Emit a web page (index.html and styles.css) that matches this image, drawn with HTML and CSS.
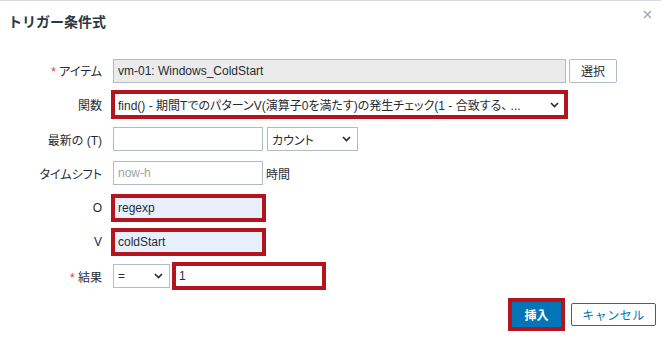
FILE: index.html
```html
<!DOCTYPE html>
<html lang="ja">
<head>
    <meta charset="UTF-8">
    <meta name="viewport" content="width=device-width, initial-scale=1.0">
    <title>トリガー条件式</title>
    <link rel="stylesheet" href="styles.css">
</head>
<body>
    <div class="dialog">
        <div class="head">
            <h4 class="title">トリガー条件式</h4>
            <button class="close" title="閉じる">
                <svg width="9" height="9" viewBox="0 0 9 9"><path d="M1 1L8 8M8 1L1 8" stroke="#a3adb2" stroke-width="1.6" fill="none"/></svg>
            </button>
        </div>

        <form class="form">
            <label class="label"><span class="req">*</span> アイテム</label>
            <div class="field">
                <input class="input wide" type="text" value="vm-01: Windows_ColdStart" readonly>
                <button type="button" class="btn-alt">選択</button>
            </div>

            <label class="label">関数</label>
            <div class="field">
                <button type="button" class="select wide hl">
                    <span class="sel-text">find() - 期間TでのパターンV(演算子0を満たす)の発生チェック(1 - 合致する、 ...</span>
                    <svg class="chev" width="9" height="6" viewBox="0 0 9 6"><path d="M1 1L4.5 4.5L8 1" stroke="#1f2c33" stroke-width="1.6" fill="none"/></svg>
                </button>
            </div>

            <label class="label">最新の (T)</label>
            <div class="field">
                <input class="input" type="text">
                <button type="button" class="select count">
                    <span class="sel-text">カウント</span>
                    <svg class="chev" width="9" height="6" viewBox="0 0 9 6"><path d="M1 1L4.5 4.5L8 1" stroke="#1f2c33" stroke-width="1.6" fill="none"/></svg>
                </button>
            </div>

            <label class="label">タイムシフト</label>
            <div class="field">
                <input class="input" type="text" placeholder="now-h">
                <span class="unit">時間</span>
            </div>

            <label class="label">O</label>
            <div class="field">
                <input class="input filled hl" type="text" value="regexp">
            </div>

            <label class="label">V</label>
            <div class="field">
                <input class="input filled hl" type="text" value="coldStart">
            </div>

            <label class="label"><span class="req">*</span> 結果</label>
            <div class="field">
                <button type="button" class="select op">
                    <span class="sel-text">=</span>
                    <svg class="chev" width="9" height="6" viewBox="0 0 9 6"><path d="M1 1L4.5 4.5L8 1" stroke="#1f2c33" stroke-width="1.6" fill="none"/></svg>
                </button>
                <input class="input hl" type="text" value="1">
            </div>
        </form>

        <div class="footer">
            <button class="btn-main hl">挿入</button>
            <button class="btn-cancel">キャンセル</button>
        </div>
    </div>
</body>
</html>
```

FILE: styles.css
```css
* {
    margin: 0;
    padding: 0;
    box-sizing: border-box;
    font-family: "Liberation Sans", "Noto Sans CJK JP", sans-serif;
}
body {
    background: #ffffff;
    color: #1f2c33;
    font-size: 12px;
}
.dialog {
    border-top: 1px solid #d5dbde;
    height: 337px;
}
.head {
    display: flex;
    justify-content: space-between;
    align-items: flex-start;
    height: 45px;
    padding: 12px 5px 0 8px;
}
.title {
    font-size: 14px;
    line-height: 18px;
    font-weight: bold;
    color: #2b3a42;
}
.close {
    border: none;
    background: none;
    width: 9px;
    height: 9px;
    margin-top: -3px;
    margin-right: 4px;
    display: flex;
}
.form {
    margin-top: 12px;
    display: grid;
    grid-template-columns: 102px 1fr;
    grid-auto-rows: 25px;
    column-gap: 11px;
    row-gap: 9.3px;
    align-items: center;
}
.label {
    text-align: right;
    font-size: 12px;
    color: #1f2c33;
    font-feature-settings: "palt";
}
.req {
    color: #e33734;
}
.field {
    display: flex;
    align-items: center;
    gap: 4px;
}
.input {
    width: 150px;
    height: 24px;
    border: 1px solid #b0bcc2;
    background: #ffffff;
    padding: 0 4px;
    font-size: 12px;
    color: #1f2c33;
    outline: none;
}
.input::placeholder {
    color: #9aa4a9;
}
.input[readonly] {
    background: #ebebeb;
}
.wide {
    width: 453px;
}
.filled {
    background: #e8f0fe;
    width: 151px;
}
.hl {
    outline: 4px solid #b3141e;
    outline-offset: -2px;
}
.btn-alt {
    width: 48px;
    height: 24px;
    margin-left: -1px;
    border: 1px solid #b0bcc2;
    border-radius: 2px;
    background: #ffffff;
    color: #1f2c33;
    font-size: 12px;
}
.select {
    display: flex;
    align-items: center;
    justify-content: space-between;
    height: 24px;
    border: 1px solid #b0bcc2;
    background: #ffffff;
    padding: 0 6px 0 4px;
    font-size: 12px;
    color: #1f2c33;
    text-align: left;
}
.select.hl {
    height: 25px;
}
.sel-text {
    flex: 1;
    overflow: hidden;
    white-space: nowrap;
    margin-right: 4px;
    font-feature-settings: "palt";
}
.chev {
    flex: none;
}
.count {
    width: 91px;
}
.op {
    width: 57px;
}
.unit {
    margin-left: -1px;
}
.footer {
    margin-top: 11px;
    display: flex;
    justify-content: flex-end;
    align-items: center;
    gap: 8px;
    padding-right: 5px;
}
.btn-main {
    width: 53px;
    height: 29px;
    border: none;
    background: #0275b8;
    color: #ffffff;
    font-size: 12px;
    font-weight: bold;
}
.btn-cancel {
    width: 85px;
    height: 23px;
    border: 1px solid #0275b8;
    border-radius: 2px;
    background: #ffffff;
    color: #0275b8;
    font-size: 12px;
    letter-spacing: 0.5px;
}
```
